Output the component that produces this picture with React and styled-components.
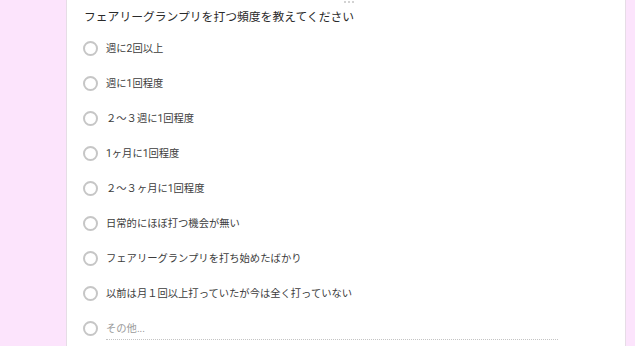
import React from "react";
import styled, { createGlobalStyle } from "styled-components";

const GlobalStyle = createGlobalStyle`
  html, body {
    margin: 0;
    padding: 0;
    background: #fce4fc;
    overflow: hidden;
  }
  body {
    font-family: Roboto, "Noto Sans CJK JP", "Noto Sans", sans-serif;
  }
`;

const options = [
  "週に2回以上",
  "週に1回程度",
  "２～３週に1回程度",
  "1ヶ月に1回程度",
  "２～３ヶ月に1回程度",
  "日常的にほぼ打つ機会が無い",
  "フェアリーグランプリを打ち始めたばかり",
  "以前は月１回以上打っていたが今は全く打っていない",
];

function App() {
  return (
    <>
      <GlobalStyle />
      <Page>
        <Card>
          <DragHandle>
            <Dot />
            <Dot />
            <Dot />
          </DragHandle>
          <Title>フェアリーグランプリを打つ頻度を教えてください</Title>
          <OptionList>
            {options.map((label) => (
              <Option key={label}>
                <Radio />
                <Label>{label}</Label>
              </Option>
            ))}
            <Option>
              <Radio />
              <OtherInput>その他...</OtherInput>
            </Option>
          </OptionList>
        </Card>
      </Page>
    </>
  );
}

export default App;

const Page = styled.div`
  height: 346px;
  padding-left: 66px;
`;

const Card = styled.section`
  position: relative;
  box-sizing: border-box;
  width: 560px;
  height: 400px;
  background: #ffffff;
  border-left: 1px solid #e6dde6;
  border-right: 1px solid #e6dde6;
  padding: 7px 17px 0;
`;

const DragHandle = styled.div`
  position: absolute;
  top: 1px;
  left: 277px;
  display: flex;
  gap: 2px;
`;

const Dot = styled.span`
  width: 2px;
  height: 2px;
  border-radius: 50%;
  background: #c4c4c4;
`;

const Title = styled.h2`
  margin: 0;
  font-size: 11.8px;
  font-weight: 400;
  line-height: 20px;
  color: #2a2a2a;
`;

const OptionList = styled.div`
  margin-top: 4px;
  display: flex;
  flex-direction: column;
`;

const Option = styled.label`
  display: flex;
  align-items: center;
  height: 35px;
`;

const Radio = styled.span`
  box-sizing: border-box;
  flex: none;
  width: 15px;
  height: 15px;
  border: 2px solid #c6c6c6;
  border-radius: 50%;
  margin-left: -1px;
  margin-right: 8px;
`;

const Label = styled.span`
  font-size: 10.3px;
  color: #3c3c3c;
  line-height: 16px;
`;

const OtherInput = styled.span`
  width: 452px;
  font-size: 10.3px;
  line-height: 16px;
  color: #9a9a9a;
  padding-bottom: 2px;
  margin-top: 3px;
  border-bottom: 1px dotted #c4c4c4;
`;
